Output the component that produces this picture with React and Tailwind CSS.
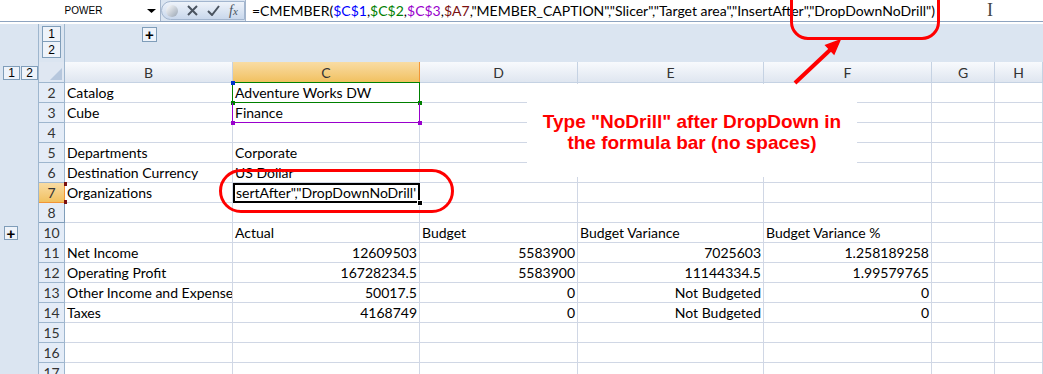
import React from 'react';

const CELL_FONT = { fontFamily: '"Lato", "Liberation Sans", sans-serif' };

const rows = [
  { n: 2, b: 'Catalog', c: 'Adventure Works DW' },
  { n: 3, b: 'Cube', c: 'Finance' },
  { n: 4 },
  { n: 5, b: 'Departments', c: 'Corporate' },
  { n: 6, b: 'Destination Currency', c: 'US Dollar' },
  { n: 7, b: 'Organizations', edit: true },
  { n: 8 },
  { n: 10, c: 'Actual', d: 'Budget', e: 'Budget Variance', f: 'Budget Variance %', plus: true },
  { n: 11, b: 'Net Income', c: '12609503', d: '5583900', e: '7025603', f: '1.258189258', num: true },
  { n: 12, b: 'Operating Profit', c: '16728234.5', d: '5583900', e: '11144334.5', f: '1.99579765', num: true },
  { n: 13, b: 'Other Income and Expense', c: '50017.5', d: '0', e: 'Not Budgeted', f: '0', num: true },
  { n: 14, b: 'Taxes', c: '4168749', d: '0', e: 'Not Budgeted', f: '0', num: true },
  { n: 15 },
  { n: 16 },
  { n: 17 },
];

const cols = ['B', 'C', 'D', 'E', 'F', 'G', 'H'];

const OutlineBtn = ({ children, className = '' }) => (
  <div
    className={`flex items-center justify-center border border-[#7f9db9] bg-[#eef3fa] text-[12px] leading-none text-black ${className}`}
    style={{ fontFamily: '"Liberation Sans", sans-serif' }}
  >
    {children}
  </div>
);

const Cell = ({ children, right, className = '' }) => (
  <div
    className={`h-[20px] overflow-hidden whitespace-nowrap border-b border-r border-[#d0d7e5] bg-white px-[2px] text-[14px] leading-[19px] text-black ${right ? 'text-right' : 'text-left'} ${className}`}
  >
    {children}
  </div>
);

export default function App() {
  return (
    <div className="relative h-[374px] w-[1043px] overflow-hidden bg-white" style={CELL_FONT}>
      {/* formula bar */}
      <div className="flex h-[22px] border-b border-[#8ea4c0] bg-[#dbe5f1]">
        <div className="flex w-[161px] items-center border-r border-[#a5b6cc] bg-white">
          <span
            className="flex-1 pl-[20px] text-center text-[10px] text-black"
            style={{ fontFamily: '"Liberation Sans", sans-serif' }}
          >
            POWER
          </span>
          <svg width="9" height="4" viewBox="0 0 9 4" className="mr-[4px]">
            <path d="M0 0h9L4.5 4z" fill="#000" />
          </svg>
        </div>
        <div className="my-[1px] flex w-[84px] items-center gap-[9px] rounded-l-[11px] border border-[#a3b6cf] bg-gradient-to-b from-[#eef3fa] to-[#c9d8ec] pl-[4px]">
          <div className="h-[12px] w-[12px] rounded-full bg-gradient-to-br from-white to-[#9aa6b4]" />
          <svg width="11" height="11" viewBox="0 0 11 11">
            <path d="M1 1l9 9M10 1l-9 9" stroke="#4a5460" strokeWidth="2" />
          </svg>
          <svg width="13" height="11" viewBox="0 0 13 11">
            <path d="M1 6l4 4 7-9" stroke="#4a5460" strokeWidth="2" fill="none" />
          </svg>
          <span
            className="text-[14px] italic leading-none text-[#4a5460]"
            style={{ fontFamily: '"Liberation Serif", serif' }}
          >
            f<span className="text-[11px]">x</span>
          </span>
        </div>
        <div className="flex flex-1 items-center border-l border-[#a5b6cc] bg-white pl-[6px] text-[14px] text-black">
          <span className="whitespace-nowrap">
            =CMEMBER(<span className="text-[#0000ff]">$C$1</span>,<span className="text-[#008000]">$C$2</span>,
            <span className="text-[#9900cc]">$C$3</span>,<span className="text-[#7a1010]">$A7</span>
            ,"MEMBER_CAPTION","Slicer","Target area","InsertAfter","DropDownNoDrill")
          </span>
          <span
            className="ml-auto mr-[50px] text-[18px] font-light text-[#444]"
            style={{ fontFamily: '"Liberation Serif", serif' }}
          >
            I
          </span>
        </div>
      </div>

      {/* outline band */}
      <div className="flex h-[40px] border-t-2 border-white bg-[#dbe5f1]">
        <div className="w-[39px] border-r border-[#9eb6ce]" />
        <div className="flex w-[26px] flex-col items-center border-r border-[#9eb6ce] pt-[2px]">
          <OutlineBtn className="h-[16px] w-[19px]">1</OutlineBtn>
          <OutlineBtn className="h-[16px] w-[19px] border-t-0">2</OutlineBtn>
        </div>
        <div className="pl-[77px] pt-[3px]">
          <OutlineBtn className="h-[15px] w-[15px] text-[15px] font-bold">+</OutlineBtn>
        </div>
      </div>

      {/* sheet */}
      <div className="grid grid-cols-[39px_26px_168px_187px_158px_186px_168px_63px_1fr]">
        {/* header row */}
        <div className="flex h-[21px] items-center gap-[1px] border-r border-[#9eb6ce] bg-[#dbe5f1] pl-[3px]">
          <OutlineBtn className="h-[14px] w-[17px]">1</OutlineBtn>
          <OutlineBtn className="h-[14px] w-[17px]">2</OutlineBtn>
        </div>
        <div className="relative h-[21px] border-b border-r border-[#9eb6ce] bg-[#dfe7f2]">
          <svg width="12" height="12" viewBox="0 0 12 12" className="absolute bottom-[2px] right-[2px]">
            <path d="M12 0v12H0z" fill="#b6c7dd" />
          </svg>
        </div>
        {cols.map((c) => (
          <div
            key={c}
            className={`flex h-[21px] items-center justify-center border-b border-r text-[14px] ${
              c === 'C'
                ? 'border-[#f29536] bg-gradient-to-b from-[#f9dca3] to-[#f1c15f] text-[#333]'
                : 'border-[#c5d2e3] bg-gradient-to-b from-[#f8fafd] to-[#dfe6f0] text-[#333]'
            }`}
          >
            {c}
          </div>
        ))}

        {rows.map((r) => (
          <React.Fragment key={r.n}>
            <div className="flex h-[20px] items-center border-r border-[#9eb6ce] bg-[#dbe5f1] pl-[4px]">
              {r.plus && <OutlineBtn className="h-[14px] w-[14px] text-[15px] font-bold">+</OutlineBtn>}
            </div>
            <div
              className={`flex h-[20px] items-center justify-center border-b border-r text-[14px] ${
                r.n === 7
                  ? 'border-[#f29536] bg-gradient-to-b from-[#f9dca3] to-[#f1c15f] text-[#333]'
                  : r.n === 8
                  ? 'border-[#7f9db9] bg-[#e4ecf7] text-[#333]'
                  : 'border-[#9eb6ce] bg-[#e4ecf7] text-[#333]'
              }`}
            >
              {r.n}
            </div>
            <Cell>{r.b}</Cell>
            {r.edit ? (
              <div className="relative h-[20px] overflow-hidden whitespace-nowrap border-2 border-black bg-white pl-[1px] text-[14px] leading-[16px]">
                sertAfter","DropDownNoDrill'
              </div>
            ) : (
              <Cell right={r.num}>{r.c}</Cell>
            )}
            <Cell right={r.num}>{r.d}</Cell>
            <Cell right={r.num}>{r.e}</Cell>
            <Cell right={r.num}>{r.f}</Cell>
            <Cell />
            <Cell />
          </React.Fragment>
        ))}
      </div>

      {/* range reference highlights */}
      <div className="pointer-events-none absolute left-[232px] top-[82px] h-[21px] w-[188px] border border-[#008000]" />
      <div className="absolute left-[231px] top-[81px] h-[4px] w-[4px] bg-[#0033cc]" />
      <div className="absolute left-[231px] top-[101px] h-[4px] w-[4px] bg-[#008000]" />
      <div className="absolute left-[418px] top-[101px] h-[4px] w-[4px] bg-[#008000]" />
      <div className="pointer-events-none absolute left-[232px] top-[103px] h-[20px] w-[188px] border border-t-0 border-[#9900cc]" />
      <div className="absolute left-[231px] top-[121px] h-[4px] w-[4px] bg-[#9900cc]" />
      <div className="absolute left-[418px] top-[121px] h-[4px] w-[4px] bg-[#9900cc]" />
      <div className="absolute left-[64px] top-[182px] h-[4px] w-[3px] bg-[#7a1010]" />
      <div className="absolute left-[64px] top-[200px] h-[4px] w-[3px] bg-[#7a1010]" />
      <div className="absolute left-[417px] top-[200px] h-[6px] w-[6px] border border-white bg-black" />

      {/* annotation */}
      <div className="absolute left-[527px] top-[84px] flex h-[93px] w-[330px] flex-col items-center justify-center bg-white">
        <p
          className="mt-[2px] text-center text-[19px] font-bold leading-[21px] text-[#ff0000]"
          style={{ fontFamily: '"Liberation Sans", Arial, sans-serif' }}
        >
          Type "NoDrill" after DropDown in
          <br />
          the formula bar (no spaces)
        </p>
      </div>

      {/* red callouts */}
      <div className="pointer-events-none absolute left-[790px] top-[-20px] h-[60px] w-[150px] rounded-[18px] border-[3px] border-[#ff0000]" />
      <div className="pointer-events-none absolute left-[219px] top-[169px] h-[44px] w-[235px] rounded-[22px] border-[3px] border-[#ff0000]" />
      <svg className="pointer-events-none absolute left-[780px] top-[30px]" width="70" height="60" viewBox="0 0 70 60">
        <path d="M15 53L50 20" stroke="#ff0000" strokeWidth="4" />
        <path d="M60 10L54 24L45.8 15.4z" fill="#ff0000" stroke="#ff0000" strokeWidth="1.5" />
      </svg>
    </div>
  );
}
